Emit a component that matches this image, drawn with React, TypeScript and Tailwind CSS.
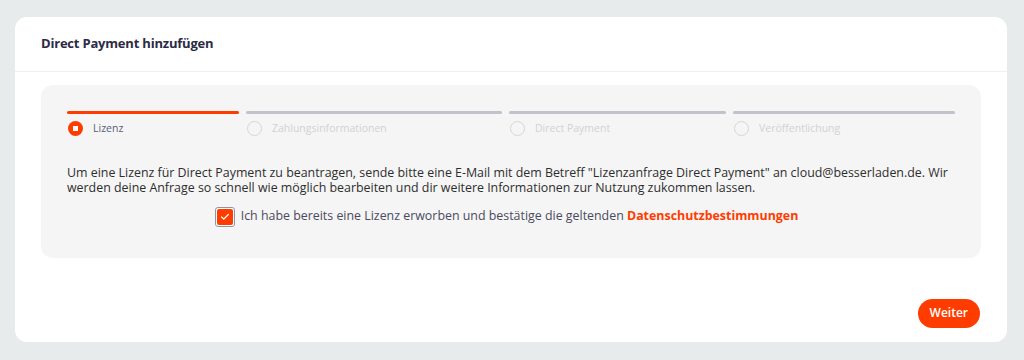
import { Check } from "lucide-react";

const steps = [
  { label: "Lizenz", width: "w-[172px]", active: true },
  { label: "Zahlungsinformationen", width: "w-[256px]", active: false },
  { label: "Direct Payment", width: "w-[217px]", active: false },
  { label: "Veröffentlichung", width: "w-[222px]", active: false },
];

const StepIndicator = () => (
  <div className="flex gap-[7px]">
    {steps.map((step) => (
      <div key={step.label} className={step.width}>
        <div className={`h-[3px] rounded-full ${step.active ? "bg-[#ff3c00]" : "bg-[#c2c2cc]"}`} />
        <div className="mt-[7px] flex items-center gap-[10px] pl-px">
          {step.active ? (
            <div className="flex h-[15px] w-[15px] items-center justify-center rounded-full bg-[#ff3c00]">
              <div className="h-[5px] w-[5px] bg-white" />
            </div>
          ) : (
            <div className="h-[15px] w-[15px] rounded-full border border-[#d6d6d6]" />
          )}
          <span className={`text-[10.5px] ${step.active ? "text-[#5b5d7a]" : "text-[#d2d2d2]"}`}>
            {step.label}
          </span>
        </div>
      </div>
    ))}
  </div>
);

export default function App() {
  return (
    <div className="min-h-[360px] bg-[#e7ebeb] pl-[15px] pr-[17px] pt-[17px] pb-[19px] font-['Open_Sans',sans-serif]">
      <div className="rounded-[12px] bg-white">
        <div className="flex h-[55px] items-center border-b border-[#f0f0f0] px-[26px]">
          <h1 className="text-[13px] font-bold tracking-[-0.2px] text-[#2b2b45]">Direct Payment hinzufügen</h1>
        </div>
        <div className="px-[26px] pt-[13px]">
          <div className="rounded-[12px] bg-[#f5f5f5] px-[26px] pt-[26px] pb-[31px]">
            <StepIndicator />
            <p className="mt-[28px] text-[12.4px] leading-[15px] text-[#2e2e2e]">
              Um eine Lizenz für Direct Payment zu beantragen, sende bitte eine E-Mail mit dem Betreff "Lizenzanfrage Direct Payment" an cloud@besserladen.de. Wir werden deine Anfrage so schnell wie möglich bearbeiten und dir weitere Informationen zur Nutzung zukommen lassen.
            </p>
            <div className="mt-[12px] flex items-center justify-center gap-[6px] pr-[9px]">
              <div className="flex h-[20px] w-[20px] items-center justify-center rounded-[3px] border border-[#8e93a8] bg-white p-[1px]">
                <div className="flex h-full w-full items-center justify-center rounded-[2px] bg-[#ff3c00]">
                  <Check className="h-[10px] w-[10px] text-white" strokeWidth={3} />
                </div>
              </div>
              <span className="text-[12.4px] text-[#4a4b5e]">
                Ich habe bereits eine Lizenz erworben und bestätige die geltenden{" "}
                <span className="font-bold text-[#ff3c00]">Datenschutzbestimmungen</span>
              </span>
            </div>
          </div>
        </div>
        <div className="flex justify-end px-[27px] pt-[41px] pb-[14px]">
          <button className="h-[29px] rounded-full bg-[#ff3c00] px-[12px] text-[12px] font-semibold text-white">
            Weiter
          </button>
        </div>
      </div>
    </div>
  );
}
